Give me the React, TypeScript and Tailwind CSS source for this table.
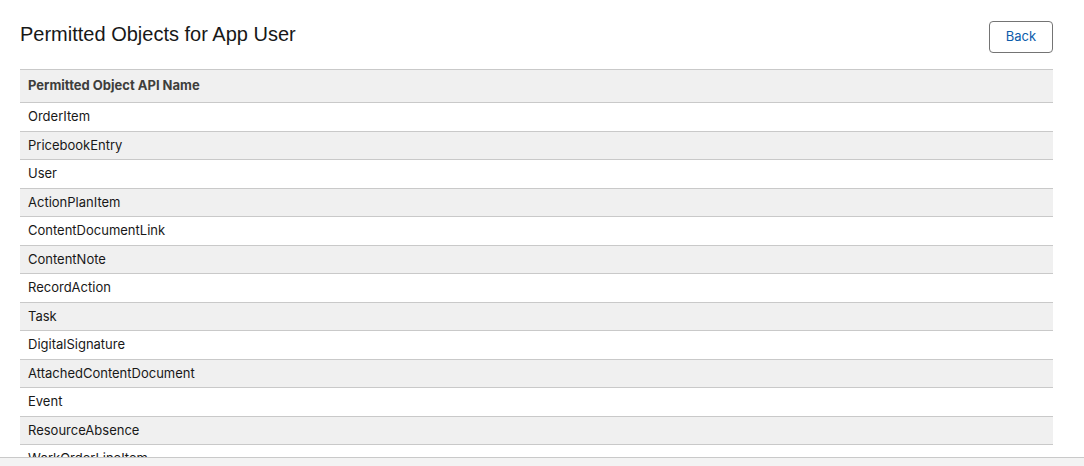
const objects = [
  "OrderItem",
  "PricebookEntry",
  "User",
  "ActionPlanItem",
  "ContentDocumentLink",
  "ContentNote",
  "RecordAction",
  "Task",
  "DigitalSignature",
  "AttachedContentDocument",
  "Event",
  "ResourceAbsence",
  "WorkOrderLineItem",
  "ServiceAppointment",
];

export default function App() {
  return (
    <div className="flex h-[466px] w-[1084px] flex-col overflow-hidden bg-white font-['Inter',sans-serif] text-[#181818]">
      <div className="flex-1 overflow-hidden pl-5 pr-[31px] pt-[21px]">
        <div className="flex items-start justify-between">
          <h1 className="font-['Liberation_Sans',Arial,sans-serif] text-[20px] leading-[26px] text-[#181818]">
            Permitted Objects for App User
          </h1>
          <button className="h-8 w-16 rounded border border-[#747474] bg-white text-[13px] text-[#0b5cab]">
            Back
          </button>
        </div>
        <table className="mt-[16px] w-full border-collapse text-[13px]">
          <thead>
            <tr className="h-[33px] border-y border-[#c9c9c9] bg-[#f0f0f0]">
              <th className="px-2 text-left font-bold text-[#3e3e3c]">
                Permitted Object API Name
              </th>
            </tr>
          </thead>
          <tbody>
            {objects.map((name, i) => (
              <tr
                key={name}
                className={
                  "h-[28.5px] border-b border-[#c9c9c9] " +
                  (i % 2 === 1 ? "bg-[#f0f0f0]" : "bg-white")
                }
              >
                <td className="px-2">{name}</td>
              </tr>
            ))}
          </tbody>
        </table>
      </div>
      <div className="h-[9px] border-t border-[#c9c9c9] bg-[#f3f3f3]" />
    </div>
  );
}
